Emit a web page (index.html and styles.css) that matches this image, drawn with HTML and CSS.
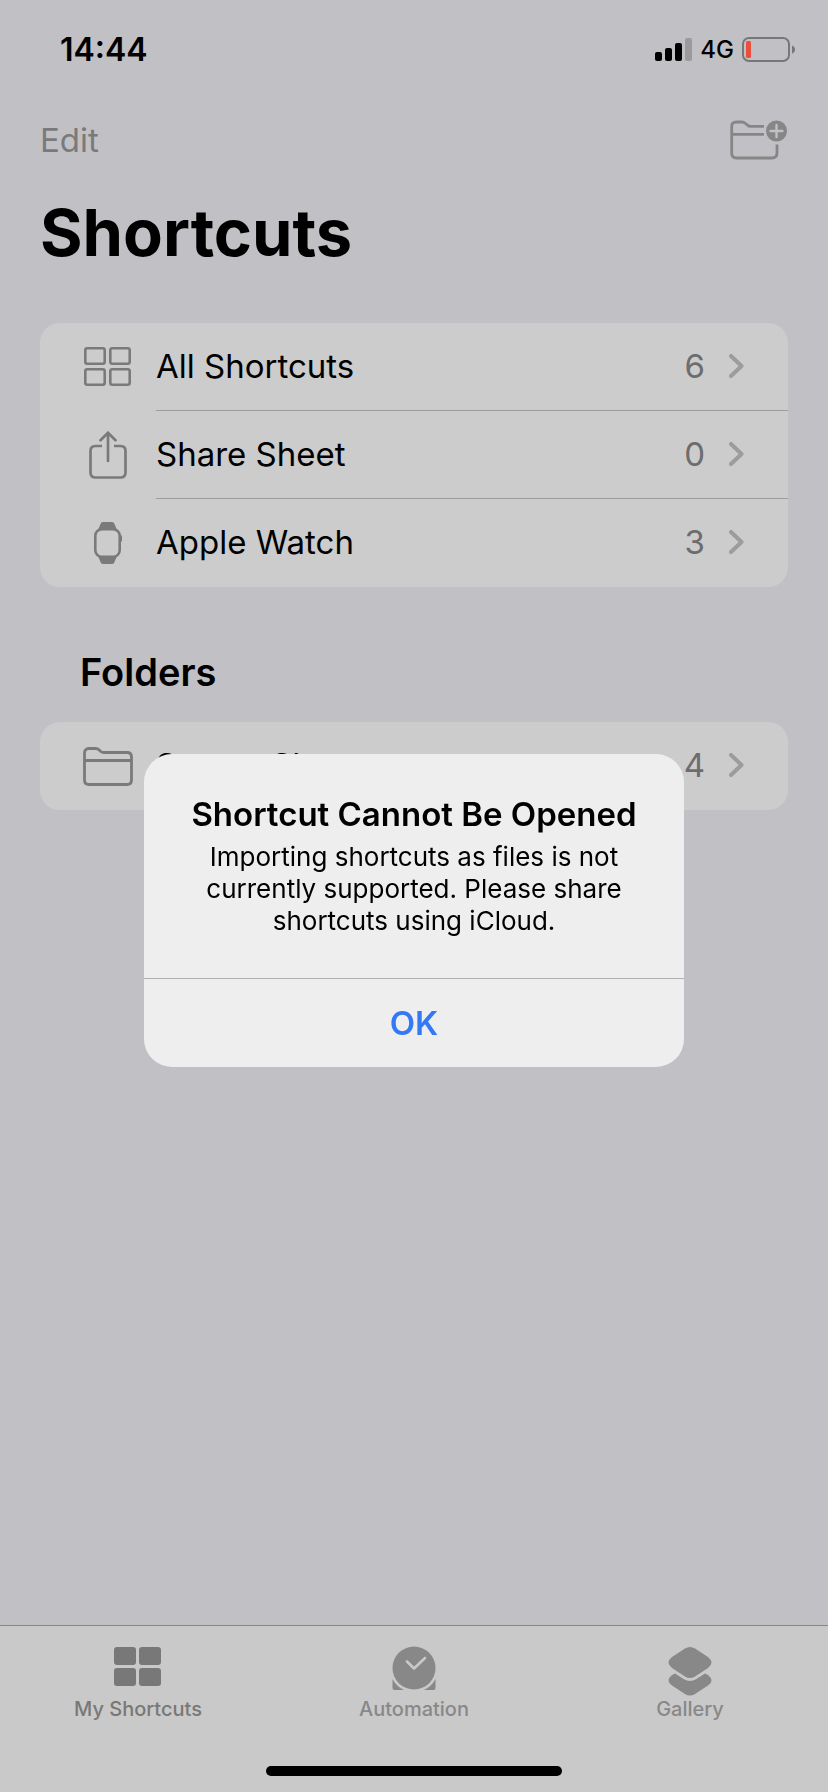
FILE: index.html
```html
<!DOCTYPE html>
<html lang="en">
<head>
<meta charset="utf-8">
<meta name="viewport" content="width=device-width, initial-scale=1">
<title>Shortcuts</title>
<link rel="stylesheet" href="styles.css">
</head>
<body>
<div class="app">
  <div class="status">
    <time class="status-time">14:44</time>
    <div class="status-icons">
      <svg width="37" height="23" viewBox="0 0 37 23" aria-hidden="true">
        <rect x="0" y="14" width="7" height="9" rx="2"/>
        <rect x="10" y="10" width="7" height="13" rx="2"/>
        <rect x="20" y="5" width="7" height="18" rx="2"/>
        <rect x="30" y="0" width="7" height="23" rx="2" fill="#9a9a9d"/>
      </svg>
      <span class="network">4G</span>
      <svg width="53" height="25" viewBox="0 0 53 25" aria-hidden="true">
        <rect x="1" y="1" width="46" height="23" rx="6" fill="none" stroke="#77777a" stroke-width="2"/>
        <rect x="4" y="4" width="5" height="17" rx="1.5" fill="#eb4e3d"/>
        <path d="M50 8.500Q53 9.500 53 12.500T50 16.500Z" fill="#77777a"/>
      </svg>
    </div>
  </div>

  <header class="header">
    <div class="toolbar">
      <button class="text-button" type="button">Edit</button>
      <button class="icon-button" type="button" aria-label="New Folder">
        <svg width="58" height="40" viewBox="0 0 58 40" fill="none" stroke="#868687" stroke-width="2.800" aria-hidden="true">
          <path d="M34 6.300H20.500Q18.800 6.300 17.500 5.100L15.500 3.500Q13.700 2 12 2H6.300Q1.700 2 1.700 6.500V33Q1.700 38 6.500 38H42Q47 38 47 33V24.500M1.700 14.400H34"/>
          <circle cx="46.500" cy="11" r="10.500" fill="#868687" stroke="none"/>
          <path d="M46.500 5V17M40.500 11H52.500" stroke="#c1c0c5" stroke-width="2.400" stroke-linecap="round"/>
        </svg>
      </button>
    </div>
    <h1 class="title">Shortcuts</h1>
  </header>

  <main class="content">
    <nav class="list" aria-label="Shortcuts">
      <a class="row" href="#all">
        <span class="row-icon">
          <svg width="48" height="40" viewBox="0 0 48 40" fill="none" stroke="#7a7a7a" stroke-width="2.600" aria-hidden="true">
            <rect x="1.300" y="1.300" width="19.400" height="15.400" rx="2"/>
            <rect x="26.300" y="1.300" width="19.400" height="15.400" rx="2"/>
            <rect x="1.300" y="22.300" width="19.400" height="15.400" rx="2"/>
            <rect x="26.300" y="22.300" width="19.400" height="15.400" rx="2"/>
          </svg>
        </span>
        <span class="row-body"><span class="row-name">All Shortcuts</span><span class="row-count">6</span>
          <svg class="chevron" width="15" height="24" viewBox="0 0 15 24" aria-hidden="true"><path d="M2 2L12.500 12L2 22"/></svg></span>
      </a>
      <a class="row" href="#share">
        <span class="row-icon">
          <svg width="38" height="48" viewBox="0 0 38 48" fill="none" stroke="#7a7a7a" stroke-width="2.700" aria-hidden="true">
            <path d="M13 15H6.500Q1.500 15 1.500 20V41.500Q1.500 46.500 6.500 46.500H31.500Q36.500 46.500 36.500 41.500V20Q36.500 15 31.500 15H25"/>
            <path d="M19 30V2M11.500 9.300L19 1.800L26.500 9.300" stroke-linecap="round"/>
          </svg>
        </span>
        <span class="row-body"><span class="row-name">Share Sheet</span><span class="row-count">0</span>
          <svg class="chevron" width="15" height="24" viewBox="0 0 15 24" aria-hidden="true"><path d="M2 2L12.500 12L2 22"/></svg></span>
      </a>
      <a class="row" href="#watch">
        <span class="row-icon">
          <svg width="28" height="42" viewBox="0 0 28 42" fill="#7a7a7a" aria-hidden="true">
            <path d="M4 8L6.500 2Q7 0 9 0H18Q20 0 20.500 2L23 8ZM4 34L6.500 40Q7 42 9 42H18Q20 42 20.500 40L23 34ZM26 13H26.500Q28 13 28 14.500V18.500Q28 20 26.500 20H26Z"/>
            <rect x="1.300" y="7.300" width="24.400" height="27.400" rx="6.500" fill="#ccc" stroke="#7a7a7a" stroke-width="2.600"/>
          </svg>
        </span>
        <span class="row-body"><span class="row-name">Apple Watch</span><span class="row-count">3</span>
          <svg class="chevron" width="15" height="24" viewBox="0 0 15 24" aria-hidden="true"><path d="M2 2L12.500 12L2 22"/></svg></span>
      </a>
    </nav>

    <h2 class="section-title">Folders</h2>
    <nav class="list" aria-label="Folders">
      <a class="row" href="#starter">
        <span class="row-icon">
          <svg width="50" height="39" viewBox="0 0 50 39" fill="none" stroke="#7a7a7a" stroke-width="2.800" aria-hidden="true">
            <path d="M1.500 6V33Q1.500 37.500 6 37.500H44Q48.500 37.500 48.500 33V10Q48.500 5.500 44 5.500H21Q19 5.500 17.500 4.200L16.500 3.200Q14.700 1.500 12.500 1.500H6Q1.500 1.500 1.500 6ZM1.500 13.500H48.500"/>
          </svg>
        </span>
        <span class="row-body"><span class="row-name">Starter Shortcuts</span><span class="row-count">4</span>
          <svg class="chevron" width="15" height="24" viewBox="0 0 15 24" aria-hidden="true"><path d="M2 2L12.500 12L2 22"/></svg></span>
      </a>
    </nav>
  </main>

  <footer class="bottom">
    <nav class="tabs" aria-label="Tabs">
      <a class="tab tab-active" href="#mine">
        <svg width="48" height="50" viewBox="0 0 48 50" fill="currentColor" aria-hidden="true">
          <rect y="1" width="22" height="18" rx="3"/><rect x="25" y="1" width="22" height="18" rx="3"/>
          <rect y="22" width="22" height="18" rx="3"/><rect x="25" y="22" width="22" height="18" rx="3"/>
        </svg>
        My Shortcuts
      </a>
      <a class="tab" href="#automation">
        <svg width="44" height="50" viewBox="0 0 44 50" fill="currentColor" aria-hidden="true">
          <path d="M.500 33Q4.500 40.500 12 44H2.500Q.500 44 .500 42ZM43.500 33Q39.500 40.500 32 44H41.500Q43.500 44 43.500 42Z"/>
          <circle cx="22" cy="22" r="21.500"/>
          <path d="M15 15.500L22 22.500L33 12" fill="none" stroke="#c9c9c9" stroke-width="2.600" stroke-linecap="round" stroke-linejoin="round"/>
        </svg>
        Automation
      </a>
      <a class="tab" href="#gallery">
        <svg width="44" height="50" viewBox="0 0 44 50" fill="currentColor" aria-hidden="true">
          <path d="M17 2.500Q22-.500 27 2.500L40 11Q47 16.500 40 22L27 30.500Q22 33.500 17 30.500L4 22Q-3 16.500 4 11Z"/>
          <path d="M7 27.500L16 33.300Q22 36.800 28 33.300L37 27.500L40 29Q47 34.500 40 39.500L27 48Q22 51 17 48L4 39.500Q-3 34.500 4 29Z"/>
        </svg>
        Gallery
      </a>
    </nav>
    <div class="home-indicator"></div>
  </footer>
</div>

<div class="overlay">
  <div class="alert" role="alertdialog" aria-modal="true" aria-labelledby="alert-title" aria-describedby="alert-text">
    <div class="alert-body">
      <h2 class="alert-title" id="alert-title">Shortcut Cannot Be Opened</h2>
      <p class="alert-text" id="alert-text">Importing shortcuts as files is not currently supported. Please share shortcuts using iCloud.</p>
    </div>
    <button class="alert-button" type="button">OK</button>
  </div>
</div>
</body>
</html>
```

FILE: styles.css
```css
* {
  box-sizing: border-box;
}

body {
  margin: 0;
  background: #c1c0c5;
  color: #000;
  font-family: Inter, "Liberation Sans", sans-serif;
}

h1,
h2,
p {
  margin: 0;
}

button {
  padding: 0;
  border: 0;
  background: none;
  font-family: inherit;
}

a {
  color: inherit;
  text-decoration: none;
}

svg {
  display: block;
  flex: none;
}

.app {
  display: flex;
  flex-direction: column;
  min-height: 100vh;
}

/* Status bar */
.status {
  display: flex;
  align-items: center;
  justify-content: space-between;
  height: 99px;
  padding: 0 33px 0 60px;
}

.status-time {
  font-size: 32px;
  font-weight: 600;
}

.status-icons {
  display: flex;
  align-items: center;
  gap: 8px;
}

.network {
  font-size: 24px;
  font-weight: 500;
}

/* Header */
.header {
  padding: 0 40px;
}

.toolbar {
  display: flex;
  align-items: center;
  justify-content: space-between;
  height: 82px;
}

.text-button {
  color: #7a7a7a;
  font-size: 33px;
}

.title {
  padding-top: 12px;
  font-size: 65px;
  font-weight: 700;
  line-height: 80px;
}

/* Lists */
.content {
  padding: 50px 40px;
}

.list {
  overflow: hidden;
  border-radius: 20px;
  background: #ccc;
}

.row {
  display: flex;
  gap: 20px;
  height: 88px;
  padding-left: 40px;
}

.row-icon {
  display: flex;
  flex: none;
  align-items: center;
  justify-content: center;
  width: 56px;
}

.row-body {
  display: flex;
  flex: 1;
  align-items: center;
  padding: 0 44px 1px 0;
  border-bottom: 1px solid #9c9c9d;
  font-size: 33px;
}

.row:last-child .row-body {
  border-color: transparent;
}

.row-name {
  flex: 1;
}

.row-count {
  color: #6d6d6f;
}

.chevron {
  margin-left: 24px;
  fill: none;
  stroke: #9c9c9d;
  stroke-width: 4;
  stroke-linecap: round;
  stroke-linejoin: round;
}

.section-title {
  padding: 61px 40px 26px;
  font-size: 38px;
  font-weight: 600;
  line-height: 48px;
}

/* Tab bar */
.bottom {
  margin-top: auto;
  padding-bottom: 16px;
  border-top: 1px solid #88888c;
  background: #c9c9c9;
}

.tabs {
  display: grid;
  grid-template-columns: repeat(3, 1fr);
  padding: 20px 0 45px;
}

.tab {
  display: flex;
  flex-direction: column;
  align-items: center;
  gap: 1px;
  color: #888889;
  font-size: 20px;
  font-weight: 500;
  line-height: 24px;
}

.tab-active {
  color: #787878;
}

.home-indicator {
  width: 296px;
  height: 10px;
  margin: 0 auto;
  border-radius: 5px;
  background: #000;
}

/* Alert */
.overlay {
  position: fixed;
  inset: 0;
  display: flex;
  align-items: center;
  justify-content: center;
  padding-top: 28px;
}

.alert {
  width: 540px;
  overflow: hidden;
  border-radius: 28px;
  background: #eeeeef;
  text-align: center;
}

.alert-body {
  padding: 38px 32px 41px;
}

.alert-title {
  font-size: 33px;
  font-weight: 600;
  line-height: 44px;
}

.alert-text {
  padding: 5px 16px 0;
  font-size: 26px;
  line-height: 32px;
}

.alert-button {
  width: 100%;
  height: 89px;
  border-top: 1px solid #b0b0b3;
  color: #3478f6;
  font-size: 33px;
  font-weight: 600;
}
```
